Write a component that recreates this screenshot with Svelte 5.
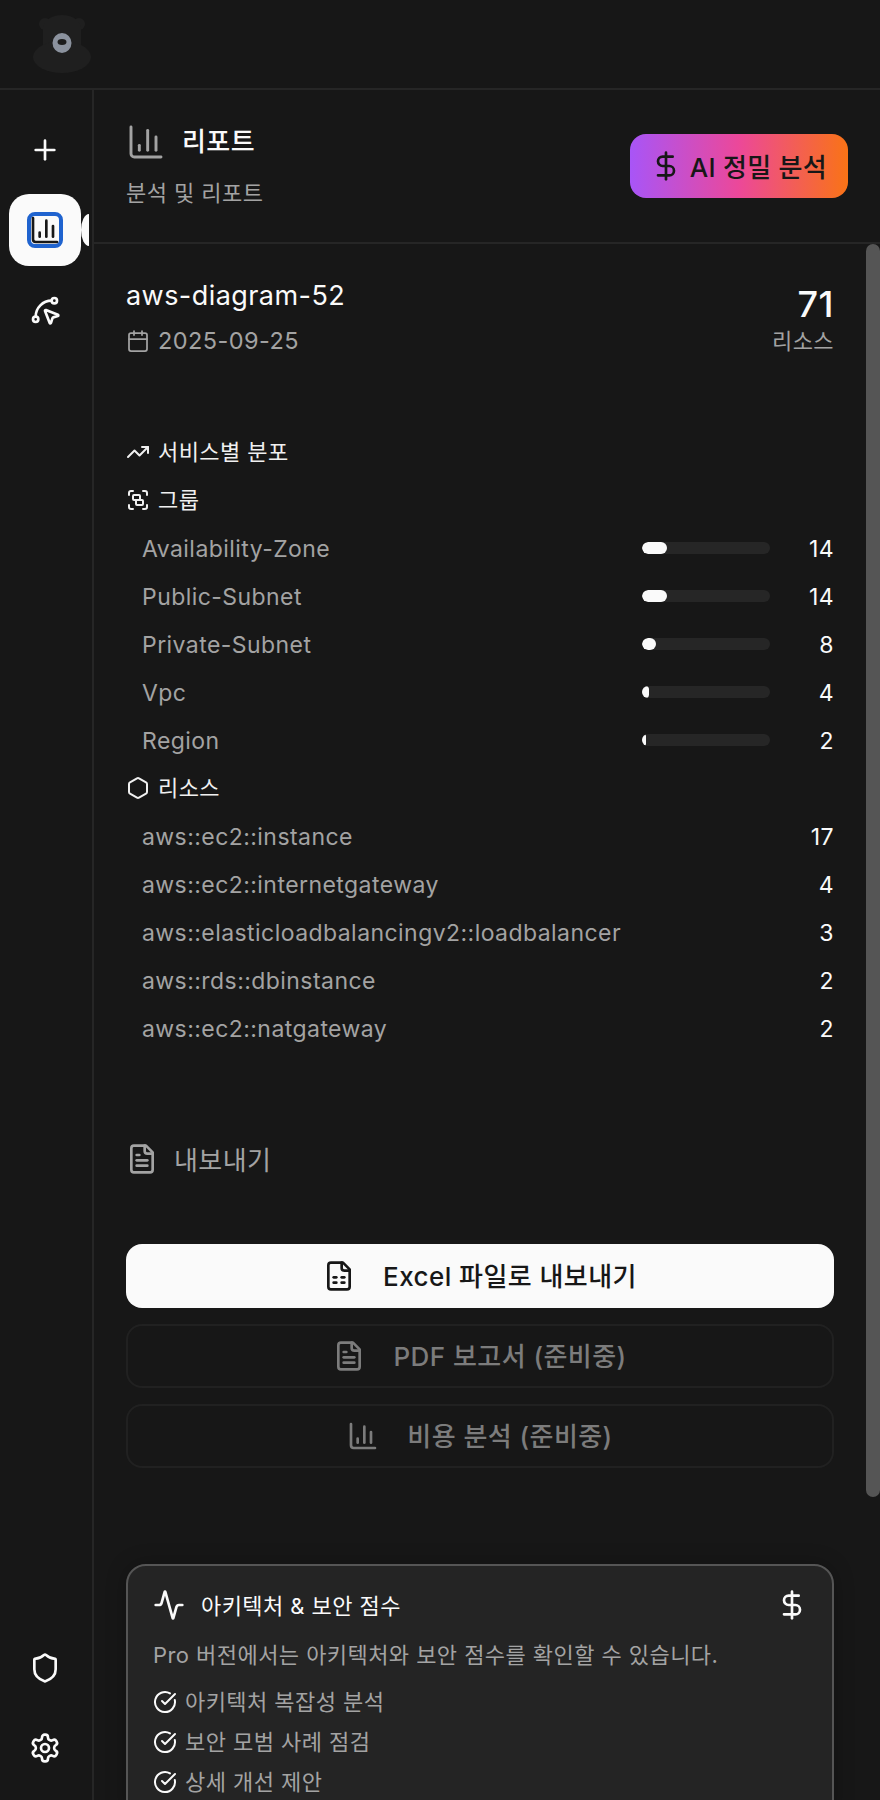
<script>
  const paths = {
    plus: '<path d="M5 12h14"/><path d="M12 5v14"/>',
    chart: '<path d="M3 3v16a2 2 0 0 0 2 2h16"/><path d="M18 17V9"/><path d="M13 17V5"/><path d="M8 17v-3"/>',
    spline: '<path d="M12.034 12.681a.498.498 0 0 1 .647-.647l9 3.5a.5.5 0 0 1-.033.943l-3.444 1.068a1 1 0 0 0-.66.66l-1.067 3.443a.5.5 0 0 1-.943.033z"/><path d="M5 17A12 12 0 0 1 17 5"/><circle cx="19" cy="5" r="2"/><circle cx="5" cy="19" r="2"/>',
    shield: '<path d="M20 13c0 5-3.5 7.5-7.66 8.95a1 1 0 0 1-.67-.01C7.5 20.5 4 18 4 13V6a1 1 0 0 1 1-1c2 0 4.5-1.2 6.24-2.72a1.17 1.17 0 0 1 1.52 0C14.51 3.81 17 5 19 5a1 1 0 0 1 1 1z"/>',
    settings: '<path d="M12.22 2h-.44a2 2 0 0 0-2 2v.18a2 2 0 0 1-1 1.73l-.43.25a2 2 0 0 1-2 0l-.15-.08a2 2 0 0 0-2.73.73l-.22.38a2 2 0 0 0 .73 2.73l.15.1a2 2 0 0 1 1 1.72v.51a2 2 0 0 1-1 1.74l-.15.09a2 2 0 0 0-.73 2.73l.22.38a2 2 0 0 0 2.73.73l.15-.08a2 2 0 0 1 2 0l.43.25a2 2 0 0 1 1 1.73V20a2 2 0 0 0 2 2h.44a2 2 0 0 0 2-2v-.18a2 2 0 0 1 1-1.73l.43-.25a2 2 0 0 1 2 0l.15.08a2 2 0 0 0 2.73-.73l.22-.39a2 2 0 0 0-.73-2.73l-.15-.08a2 2 0 0 1-1-1.74v-.5a2 2 0 0 1 1-1.74l.15-.09a2 2 0 0 0 .73-2.73l-.22-.38a2 2 0 0 0-2.73-.73l-.15.08a2 2 0 0 1-2 0l-.43-.25a2 2 0 0 1-1-1.73V4a2 2 0 0 0-2-2z"/><circle cx="12" cy="12" r="3"/>',
    dollar: '<line x1="12" x2="12" y1="2" y2="22"/><path d="M17 5H9.5a3.5 3.5 0 0 0 0 7h5a3.5 3.5 0 0 1 0 7H6"/>',
    calendar: '<path d="M8 2v4"/><path d="M16 2v4"/><rect width="18" height="18" x="3" y="4" rx="2"/><path d="M3 10h18"/>',
    trending: '<path d="M22 7 13.5 15.5 8.5 10.5 2 17"/><path d="M16 7h6v6"/>',
    group: '<path d="M3 7V5c0-1.1.9-2 2-2h2"/><path d="M17 3h2c1.1 0 2 .9 2 2v2"/><path d="M21 17v2c0 1.1-.9 2-2 2h-2"/><path d="M7 21H5c-1.1 0-2-.9-2-2v-2"/><rect width="7" height="5" x="7" y="7" rx="1"/><rect width="7" height="5" x="10" y="12" rx="1"/>',
    hexagon: '<path d="M21 16V8a2 2 0 0 0-1-1.73l-7-4a2 2 0 0 0-2 0l-7 4A2 2 0 0 0 3 8v8a2 2 0 0 0 1 1.73l7 4a2 2 0 0 0 2 0l7-4A2 2 0 0 0 21 16z"/>',
    fileText: '<path d="M15 2H6a2 2 0 0 0-2 2v16a2 2 0 0 0 2 2h12a2 2 0 0 0 2-2V7Z"/><path d="M14 2v4a2 2 0 0 0 2 2h4"/><path d="M10 9H8"/><path d="M16 13H8"/><path d="M16 17H8"/>',
    fileSheet: '<path d="M15 2H6a2 2 0 0 0-2 2v16a2 2 0 0 0 2 2h12a2 2 0 0 0 2-2V7Z"/><path d="M14 2v4a2 2 0 0 0 2 2h4"/><path d="M8 13h2"/><path d="M14 13h2"/><path d="M8 17h2"/><path d="M14 17h2"/>',
    activity: '<path d="M22 12h-2.48a2 2 0 0 0-1.93 1.46l-2.35 8.36a.25.25 0 0 1-.48 0L9.24 2.18a.25.25 0 0 0-.48 0l-2.35 8.36A2 2 0 0 1 4.49 12H2"/>',
    check: '<path d="M21.801 10A10 10 0 1 1 17 3.335"/><path d="m9 11 3 3L22 4"/>'
  };

  const total = 71;
  const groups = [
    { name: 'Availability-Zone', count: 14 },
    { name: 'Public-Subnet', count: 14 },
    { name: 'Private-Subnet', count: 8 },
    { name: 'Vpc', count: 4 },
    { name: 'Region', count: 2 }
  ];
  const resources = [
    { name: 'aws::ec2::instance', count: 17 },
    { name: 'aws::ec2::internetgateway', count: 4 },
    { name: 'aws::elasticloadbalancingv2::loadbalancer', count: 3 },
    { name: 'aws::rds::dbinstance', count: 2 },
    { name: 'aws::ec2::natgateway', count: 2 }
  ];
  const checks = ['아키텍처 복잡성 분석', '보안 모범 사례 점검', '상세 개선 제안'];
</script>

{#snippet icon(name, size = 24, sw = 2)}
  <svg class="icon" width={size} height={size} viewBox="0 0 24 24" fill="none" stroke="currentColor" stroke-width={sw} stroke-linecap="round" stroke-linejoin="round">{@html paths[name]}</svg>
{/snippet}

<div class="app">
  <header class="topbar">
    <svg class="logo" width="60" height="60" viewBox="0 0 60 60">
      <circle cx="13" cy="9" r="6" fill="#1f1f1f" />
      <circle cx="47" cy="9" r="6" fill="#1f1f1f" />
      <ellipse cx="30" cy="14" rx="19" ry="14" fill="#1f1f1f" />
      <rect x="11" y="12" width="38" height="24" fill="#1f1f1f" />
      <ellipse cx="30" cy="42" rx="29" ry="16" fill="#1f1f1f" />
      <ellipse cx="30" cy="28" rx="9.5" ry="10" fill="#8b929e" />
      <ellipse cx="30" cy="27" rx="4.5" ry="3" fill="#1c1c1c" />
    </svg>
  </header>

  <div class="body">
    <nav class="sidebar">
      <div class="nav-group">
        <button class="nav-item">{@render icon('plus', 32, 2)}</button>
        <button class="nav-item active">
          <span class="ring">{@render icon('chart', 32, 2)}</span>
        </button>
        <button class="nav-item">{@render icon('spline', 32, 2)}</button>
      </div>
      <div class="nav-group">
        <button class="nav-item">{@render icon('shield', 32, 2)}</button>
        <button class="nav-item">{@render icon('settings', 32, 2)}</button>
      </div>
    </nav>

    <main class="main">
      <div class="main-head">
        <div class="head-left">
          <div class="head-title">
            <span class="muted-icon">{@render icon('chart', 40, 1.75)}</span>
            <h1>리포트</h1>
          </div>
          <p>분석 및 리포트</p>
        </div>
        <button class="ai-btn">{@render icon('dollar', 32, 2)}<span>AI 정밀 분석</span></button>
      </div>

      <div class="scroll-wrap">
        <div class="scroller">
          <section class="summary">
            <div>
              <h2>aws-diagram-52</h2>
              <div class="date">{@render icon('calendar', 24, 1.75)}<span>2025-09-25</span></div>
            </div>
            <div class="total">
              <strong>{total}</strong>
              <span>리소스</span>
            </div>
          </section>

          <section class="dist">
            <div class="dist-title">{@render icon('trending', 24, 2)}<span>서비스별 분포</span></div>
            <div class="dist-title">{@render icon('group', 24, 2)}<span>그룹</span></div>
            {#each groups as g}
              <div class="row">
                <span class="label">{g.name}</span>
                <span class="track"><span class="fill" style:width="{(g.count / total) * 100}%"></span></span>
                <span class="value">{g.count}</span>
              </div>
            {/each}
            <div class="dist-title">{@render icon('hexagon', 24, 2)}<span>리소스</span></div>
            {#each resources as r}
              <div class="row">
                <span class="label">{r.name}</span>
                <span class="value">{r.count}</span>
              </div>
            {/each}
          </section>

          <section class="export">
            <div class="export-title">{@render icon('fileText', 32, 2)}<span>내보내기</span></div>
            <div class="export-btns">
              <button class="btn primary">{@render icon('fileSheet', 32, 2)}<span>Excel 파일로 내보내기</span></button>
              <button class="btn ghost">{@render icon('fileText', 32, 2)}<span>PDF 보고서 (준비중)</span></button>
              <button class="btn ghost">{@render icon('chart', 32, 2)}<span>비용 분석 (준비중)</span></button>
            </div>
          </section>

          <section class="card">
            <div class="card-head">
              <div class="card-title">{@render icon('activity', 32, 2)}<span>아키텍처 &amp; 보안 점수</span></div>
              <span class="card-price">{@render icon('dollar', 32, 2)}</span>
            </div>
            <p>Pro 버전에서는 아키텍처와 보안 점수를 확인할 수 있습니다.</p>
            <ul>
              {#each checks as c}
                <li><span class="check">{@render icon('check', 24, 2)}</span>{c}</li>
              {/each}
            </ul>
          </section>
        </div>
        <div class="scrollbar"><div class="thumb"></div></div>
      </div>
    </main>
  </div>
</div>

<style>
:global(body) {
  background: #171717;
}
.app {
  height: 1800px;
  display: flex;
  flex-direction: column;
  overflow: hidden;
  background: #171717;
  color: #fafafa;
  font-family: Inter, "Noto Sans CJK KR", sans-serif;
  font-optical-sizing: none;
  font-size: 22px;
  letter-spacing: 0.02em;
}
.icon {
  display: block;
  flex: none;
}
button {
  font: inherit;
  letter-spacing: inherit;
  color: inherit;
  background: none;
  border: 0;
  padding: 0;
}
h1, h2, p, ul {
  margin: 0;
  padding: 0;
  font-weight: 400;
}
.topbar {
  height: 90px;
  flex: none;
  box-sizing: border-box;
  padding-left: 32px;
  border-bottom: 2px solid #262626;
  display: flex;
  align-items: center;
}
.logo {
  margin-top: 1px;
}
.body {
  flex: 1;
  min-height: 0;
  display: flex;
}
.sidebar {
  width: 94px;
  flex: none;
  box-sizing: border-box;
  border-right: 2px solid #262626;
  padding: 24px 0 16px;
  display: flex;
  flex-direction: column;
  justify-content: space-between;
}
.nav-group {
  display: flex;
  flex-direction: column;
  gap: 8px;
  padding-left: 9px;
}
.nav-item {
  position: relative;
  width: 72px;
  height: 72px;
  border-radius: 20px;
  display: flex;
  align-items: center;
  justify-content: center;
}
.nav-item.active {
  background: #fafafa;
  color: #171717;
}
.nav-item.active::after {
  content: "";
  position: absolute;
  left: 72px;
  top: 20px;
  width: 8px;
  height: 32px;
  background: #fafafa;
  border-radius: 100% 0 0 100% / 50% 0 0 50%;
}
.ring {
  display: flex;
  align-items: center;
  justify-content: center;
  width: 36px;
  height: 36px;
  box-sizing: border-box;
  border: 4px solid #1f63cf;
  border-radius: 8px;
}
.main {
  flex: 1;
  min-width: 0;
  display: flex;
  flex-direction: column;
}
.main-head {
  height: 154px;
  flex: none;
  box-sizing: border-box;
  border-bottom: 2px solid #262626;
  padding: 0 32px;
  display: flex;
  align-items: center;
  justify-content: space-between;
}
.head-left {
  margin-bottom: 3px;
}
.head-title {
  display: flex;
  align-items: center;
  gap: 16px;
}
.muted-icon {
  color: #a3a3a3;
}
h1 {
  font-size: 26px;
  font-weight: 500;
  line-height: 32px;
  margin-bottom: 1px;
}
.head-left p {
  margin-top: 17px;
  line-height: 28px;
  color: #a3a3a3;
}
.ai-btn {
  height: 64px;
  padding: 0 21px 0 20px;
  border-radius: 16px;
  display: flex;
  align-items: center;
  gap: 8px;
  color: #171717;
  font-weight: 500;
  font-size: 26px;
  letter-spacing: 0.01em;
  background: linear-gradient(90deg, #a855f7, #ec4899, #f97316);
}
.ai-btn span {
  margin-bottom: 2px;
}
.scroll-wrap {
  flex: 1;
  min-height: 0;
  display: flex;
}
.scroller {
  flex: 1;
  min-width: 0;
  overflow: hidden;
  padding: 36px 32px 0;
}
.scrollbar {
  width: 14px;
  flex: none;
}
.thumb {
  height: 1253px;
  background: #555;
  border-radius: 7px;
}
.summary {
  display: flex;
  justify-content: space-between;
}
h2 {
  font-size: 27px;
  line-height: 32px;
}
.date {
  margin-top: 15px;
  display: flex;
  align-items: center;
  gap: 8px;
  font-size: 23.5px;
  line-height: 28px;
  color: #a3a3a3;
}
.total {
  display: flex;
  flex-direction: column;
  align-items: flex-end;
}
.total strong {
  font-size: 36px;
  font-weight: 500;
  line-height: 48px;
}
.total span {
  line-height: 28px;
  color: #a3a3a3;
  margin-top: -1px;
}
.dist {
  margin-top: 73px;
}
.dist-title {
  height: 48px;
  display: flex;
  align-items: center;
  gap: 8px;
  color: #f0f0f0;
}
.dist-title span {
  margin-bottom: 4px;
}
.row {
  height: 48px;
  padding-left: 16px;
  display: flex;
  align-items: center;
  font-size: 23px;
}
.label {
  flex: 1;
  color: #a3a3a3;
  margin-top: 2px;
}
.track {
  width: 128px;
  height: 12px;
  border-radius: 6px;
  background: #262626;
  overflow: hidden;
}
.fill {
  display: block;
  height: 100%;
  background: #fafafa;
  border-radius: 6px;
}
.value {
  width: 64px;
  text-align: right;
  margin-top: 2px;
}
.export {
  margin-top: 87px;
}
.export-title {
  height: 40px;
  display: flex;
  align-items: center;
  gap: 16px;
  font-size: 26px;
  color: #a3a3a3;
}
.export-title span {
  margin-bottom: 2px;
}
.export-btns {
  margin-top: 65px;
  display: flex;
  flex-direction: column;
  gap: 16px;
}
.btn {
  height: 64px;
  box-sizing: border-box;
  border-radius: 16px;
  display: flex;
  align-items: center;
  justify-content: center;
  gap: 28px;
  font-size: 26px;
  font-weight: 500;
}
.btn span {
  margin-bottom: 4px;
}
.btn.primary {
  background: #fafafa;
  color: #171717;
}
.btn.ghost {
  border: 2px solid #212121;
  color: #7c7c7c;
}
.card {
  margin-top: 96px;
  padding: 23px 25px 24px;
  background: #242424;
  border: 2px solid #555;
  border-radius: 20px;
  box-shadow: 0 0 20px rgba(0, 0, 0, 0.25);
}
.card-head {
  height: 32px;
  display: flex;
  align-items: center;
  justify-content: space-between;
}
.card-title {
  height: 32px;
  display: flex;
  align-items: center;
  gap: 16px;
}
.card-title span {
  margin-bottom: 2px;
}
.card-price {
  margin-right: -1px;
}
.card p {
  margin-top: 18px;
  line-height: 32px;
  color: #a3a3a3;
}
.card ul {
  margin-top: 15px;
  list-style: none;
  display: flex;
  flex-direction: column;
  gap: 8px;
}
.card li {
  display: flex;
  align-items: center;
  gap: 8px;
  line-height: 32px;
  color: #a3a3a3;
}
.check {
  color: #fafafa;
}
</style>
